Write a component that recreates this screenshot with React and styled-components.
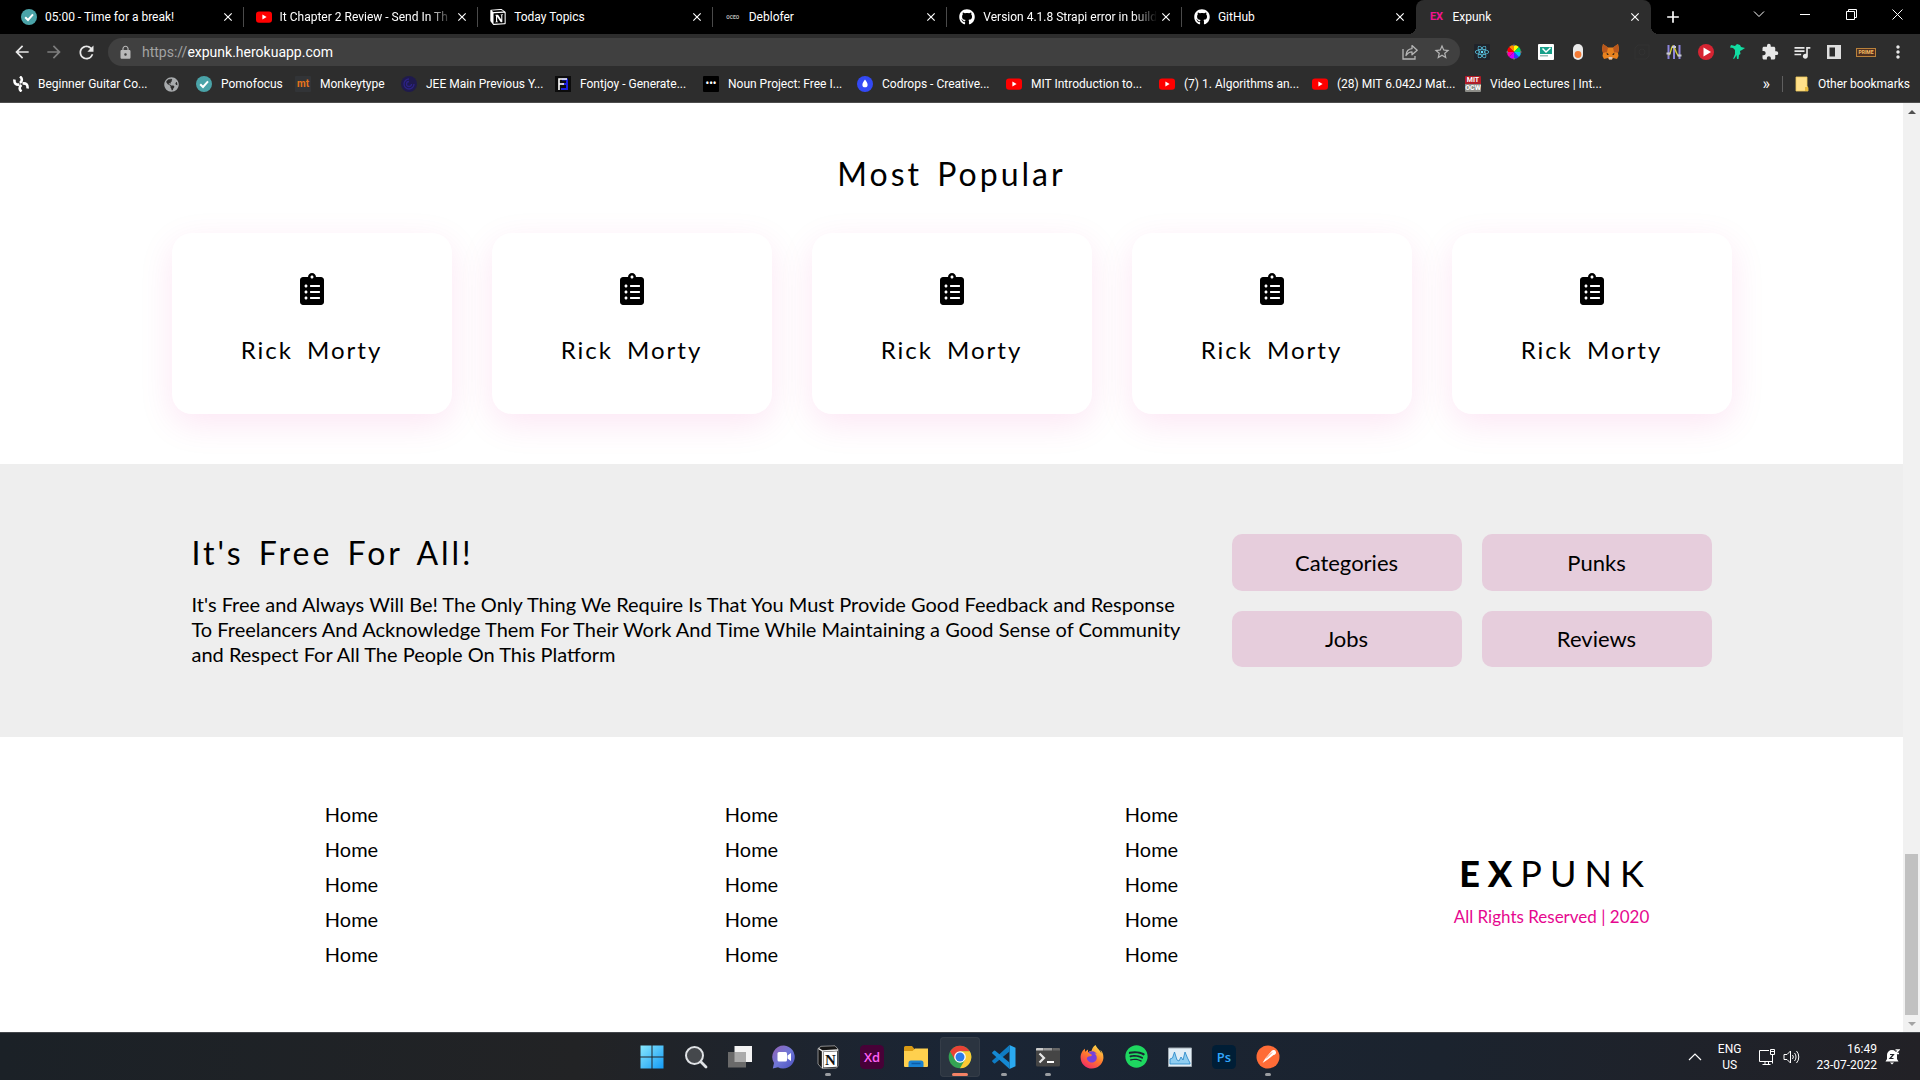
import React from "react";
import styled, { createGlobalStyle, css } from "styled-components";
import {
  FaClipboardList, FaGithub, FaYoutube, FaReact, FaSpotify, FaFirefoxBrowser, FaGlobeAmericas,
} from "react-icons/fa";
import {
  MdArrowBack, MdArrowForward, MdRefresh, MdLock, MdStarBorder, MdExtension, MdQueueMusic, MdMoreVert, MdClose, MdAdd,
} from "react-icons/md";
import { SiNotion } from "react-icons/si";

const GlobalStyle = createGlobalStyle`
  *, *::before, *::after { box-sizing: border-box; }
  body { margin: 0; background: #fff; }
  button, input { font: inherit; color: inherit; border: 0; background: none; padding: 0; margin: 0; }
  a { color: inherit; text-decoration: none; }
  h1, h2, h3, p, ul { margin: 0; padding: 0; font-weight: 400; }
  ul { list-style: none; }
  svg { display: block; flex: none; }
`;

const uiFont = `Roboto, "Open Sans", sans-serif`;
const siteFont = `Lato, "Open Sans", sans-serif`;

/* ---------- Window frame ---------- */

const Desktop = styled.div`
  display: flex;
  flex-direction: column;
  min-height: 100vh;
`;

const BrowserHeader = styled.header`
  font: 12px/16px ${uiFont};
  color: #fff;
  background: #2d2d2d;
  border-bottom: 1px solid #4d4d4d;
`;

const TabStrip = styled.div`
  display: flex;
  height: 34px;
  padding-left: 9px;
  background: #000;
`;

const Tabs = styled.div`
  display: flex;
  flex: 1 1 0;
  max-width: 1642px;
`;

const Tab = styled.div`
  display: flex;
  align-items: center;
  flex: 1 1 0;
  min-width: 0;
  padding: 0 7px 0 12px;
  position: relative;
  ${({ $divider }) => $divider && css`
    &::after {
      content: "";
      position: absolute;
      right: 0;
      top: 7px;
      height: 20px;
      width: 1px;
      background: #4a4a4a;
    }
  `}
  ${({ $active }) => $active && css`
    background: #2d2d2d;
    border-radius: 8px 8px 0 0;
    &::before, &::after {
      content: "";
      position: absolute;
      bottom: 0;
      width: 8px;
      height: 8px;
    }
    &::before {
      left: -8px;
      background: radial-gradient(circle at 0 0, transparent 8px, #2d2d2d 8px);
    }
    &::after {
      right: -8px;
      background: radial-gradient(circle at 100% 0, transparent 8px, #2d2d2d 8px);
    }
  `}
`;

const TabButton = styled.button`
  display: flex;
  align-items: center;
  gap: 8px;
  flex: 1;
  min-width: 0;
  height: 100%;
  text-align: left;
`;

const TabTitle = styled.span`
  flex: 1;
  overflow: hidden;
  white-space: nowrap;
  ${({ $fade }) => $fade && css`
    mask-image: linear-gradient(90deg, #000 calc(100% - 24px), transparent);
  `}
`;

const IconButton = styled.button`
  display: grid;
  place-items: center;
  width: ${({ $w }) => $w || 32}px;
  height: 28px;
  flex: none;
  color: ${({ $color }) => $color || "#e8e8e8"};
`;

const TabClose = styled(IconButton)`
  width: 18px;
  color: #fff;
`;

const NewTab = styled(IconButton)`
  width: 44px;
  height: 34px;
  color: #fff;
`;

const WindowControls = styled.div`
  display: flex;
  margin-left: auto;
`;

const WindowButton = styled(IconButton)`
  width: 46px;
  color: #fff;
`;

const Toolbar = styled.div`
  display: flex;
  align-items: center;
  height: 36px;
  padding: 0 6px;
`;

const AddressBar = styled.form`
  display: flex;
  align-items: center;
  flex: 1;
  height: 28px;
  margin: 0 6px;
  padding: 0 2px 0 10px;
  border-radius: 14px;
  background: #404040;
  font-size: 14px;
  color: #fff;
`;

const Scheme = styled.label`
  margin-left: 9px;
  color: #a3a3a3;
`;

const AddressInput = styled.input`
  flex: 1;
  min-width: 0;
  outline: 0;
`;

const Bookmarks = styled.nav`
  display: flex;
  align-items: center;
  height: 32px;
  padding: 0 10px 4px 13px;
`;

const Bookmark = styled.a`
  display: flex;
  align-items: center;
  gap: 9px;
  flex: 0 0 ${({ $w }) => ($w ? `${$w}px` : "auto")};
  white-space: nowrap;
`;

const BookmarksEnd = styled.div`
  display: flex;
  align-items: center;
  gap: 12px;
  margin-left: auto;
`;

const MoreBookmarks = styled.button`
  font-size: 16px;
`;

const Divider = styled.span`
  width: 1px;
  height: 16px;
  background: #5f5f5f;
`;

const Badge = styled.span`
  display: grid;
  place-items: center;
  width: 16px;
  height: 16px;
  flex: none;
  overflow: hidden;
  border-radius: ${({ $round }) => ($round ? "50%" : "1px")};
  background: ${({ $bg }) => $bg || "transparent"};
  color: ${({ $color }) => $color || "#fff"};
  font: 700 ${({ $size }) => $size || 9}px/${({ $lh }) => $lh || 16}px ${uiFont};
  text-align: center;
  white-space: normal;
`;

/* ---------- Web page ---------- */

const Viewport = styled.div`
  display: flex;
  flex: 1;
`;

const Page = styled.main`
  display: flex;
  flex-direction: column;
  flex: 1;
  min-width: 0;
  background: #fff;
  color: #000;
  font: 20px/25px ${siteFont};
`;

const Popular = styled.section`
  display: flex;
  flex-direction: column;
  align-items: center;
  gap: 40px;
  padding: 52px 20px 50px;
`;

const SectionTitle = styled.h2`
  font-size: 32px;
  line-height: 38px;
  letter-spacing: 3px;
  word-spacing: 4px;
`;

const CardRow = styled.ul`
  display: grid;
  grid-template-columns: repeat(5, 1fr);
  gap: 40px;
  width: 100%;
  max-width: 1560px;
`;

const Card = styled.li`
  display: flex;
  flex-direction: column;
  align-items: center;
  gap: 30px;
  padding: 40px 20px 49px;
  border-radius: 20px;
  background: #fff;
  box-shadow: 0 10px 35px rgba(230, 7, 143, 0.1);
`;

const CardTitle = styled.h3`
  font-size: 24px;
  line-height: 30px;
  letter-spacing: 2px;
  word-spacing: 6px;
`;

const FreeBand = styled.section`
  padding: 70px 20px;
  background: #eee;
`;

const FreeInner = styled.div`
  display: flex;
  justify-content: space-between;
  gap: 40px;
  max-width: 1520px;
  margin: 0 auto;
`;

const FreeText = styled.div`
  display: flex;
  flex-direction: column;
  flex: 1;
  gap: 20px;
  max-width: 1000px;
`;

const ButtonGrid = styled.div`
  display: grid;
  grid-template-columns: 230px 230px;
  gap: 20px;
`;

const TopicButton = styled.button`
  min-height: 56px;
  border-radius: 10px;
  background: #e6cddc;
  font-size: 22px;
`;

const Footer = styled.footer`
  display: grid;
  grid-template-columns: repeat(4, minmax(0, 400px));
  justify-content: center;
  align-items: center;
  flex: 1;
  padding: 60px 0;
`;

const FooterLinks = styled.ul`
  line-height: 35px;
  text-align: center;
`;

const Brand = styled.div`
  display: flex;
  flex-direction: column;
  align-items: center;
`;

const Wordmark = styled.p`
  padding-left: 8px;
  font-size: 36px;
  line-height: 64px;
  letter-spacing: 8px;
  strong { font-weight: 900; }
`;

const Rights = styled.p`
  color: #e6078f;
  font-size: 17px;
  line-height: 24px;
`;

const ScrollTrack = styled.div`
  display: flex;
  flex-direction: column;
  align-items: center;
  width: 17px;
  background: #f1f1f1;
`;

const ScrollArrow = styled.span`
  display: grid;
  place-items: center;
  width: 17px;
  height: 17px;
`;

const ScrollThumb = styled.div`
  width: 13px;
  height: 161px;
  margin-top: auto;
  background: #c1c1c1;
`;

/* ---------- Taskbar ---------- */

const Taskbar = styled.footer`
  display: grid;
  grid-template-columns: 1fr auto 1fr;
  align-items: center;
  height: 48px;
  border-top: 1px solid #43464b;
  background: linear-gradient(90deg, #1b2127, #222325 30%, #1a2535 50%, #1b232e 75%, #222126);
  color: #fff;
  font: 12px/16px ${uiFont};
`;

const Apps = styled.div`
  display: flex;
  gap: 4px;
  grid-column: 2;
`;

const AppButton = styled.button`
  display: grid;
  place-items: center;
  position: relative;
  width: 40px;
  height: 40px;
  border-radius: 4px;
  ${({ $active }) => $active && css`
    background: #2b3440;
    box-shadow: inset 0 0 0 1px #353d48;
  `}
  ${({ $running }) => $running && css`
    &::after {
      content: "";
      position: absolute;
      bottom: 1px;
      left: 50%;
      width: ${({ $active }) => ($active ? 16 : 6)}px;
      height: 3px;
      border-radius: 2px;
      background: ${({ $active }) => ($active ? "#f58265" : "#9a9da1")};
      transform: translateX(-50%);
    }
  `}
`;

const Tray = styled.div`
  display: flex;
  align-items: center;
  justify-content: flex-end;
  padding-right: 20px;
`;

const TrayText = styled.div`
  text-align: ${({ $align }) => $align};
  margin-right: ${({ $mr }) => $mr}px;
`;

const TrayIcons = styled.div`
  display: flex;
  gap: 8px;
  margin-right: ${({ $mr }) => $mr}px;
`;

/* ---------- Drawn icons ---------- */

const Check = () => (
  <svg width="16" height="16" viewBox="0 0 16 16">
    <circle cx="8" cy="8" r="8" fill="#4aa3a8" />
    <path d="M4.2 8.2 7 11l5-5.6" fill="none" stroke="#fff" strokeWidth="2" />
  </svg>
);
const YouTube = () => (
  <svg width="16" height="16" viewBox="0 0 16 16">
    <rect x="0" y="2.4" width="16" height="11.4" rx="3" fill="#f00" />
    <path d="M6.4 5.6v5l4.2-2.5z" fill="#fff" />
  </svg>
);
const Knot = () => (
  <svg width="16" height="16" viewBox="0 0 16 16" fill="none" stroke="#fff" strokeWidth="2.600">
    <path d="M7 .5C9.500 2.500 9.500 5 7 7M1.500 3.500C1 7.500 3 9 6.500 8.500" />
    <path d="M8.500 15.500C6 13.500 6 11 8.500 9M14.500 12.500C15 8.500 13 7 9.500 7.500" />
  </svg>
);
const Whorl = () => (
  <svg width="16" height="16" viewBox="0 0 16 16">
    <circle cx="8" cy="8" r="8" fill="#1f1a4d" />
    <path d="M8 3a5 5 0 1 0 5 5M8 5.500a2.500 2.500 0 1 0 2.500 2.500" fill="none" stroke="#2c2285" strokeWidth="1.300" />
  </svg>
);
const FontTile = () => (
  <svg width="16" height="16" viewBox="0 0 16 16">
    <rect width="16" height="16" fill="#0c0c0c" />
    <path d="M7 3.500h6M7 8h6M6 13h7M12 4v9" stroke="#1b20e0" strokeWidth="2" />
    <path d="M4 14V3h8M4 8h5" fill="none" stroke="#fff" strokeWidth="1.600" />
  </svg>
);
const Drop = () => (
  <svg width="16" height="16" viewBox="0 0 16 16">
    <circle cx="8" cy="8" r="8" fill="#3349f5" />
    <path d="M8 3.500c1.500 2.200 2.600 3.700 2.600 5.200a2.600 2.600 0 0 1-5.200 0C5.400 7.200 6.500 5.700 8 3.500z" fill="#fff" />
  </svg>
);
const Folder = () => (
  <svg width="14" height="16" viewBox="0 0 14 16">
    <path d="M1 1h11v9l1 2v3H1z" fill="#ffe08a" stroke="#eec95a" strokeWidth=".8" />
    <path d="M10 11h3v4h-3z" fill="#e8bb3d" />
  </svg>
);
const Share = () => (
  <svg width="16" height="16" viewBox="0 0 16 16" fill="none" stroke="#b5b5b5" strokeWidth="1.300">
    <path d="M1 5v10h12v-3" />
    <path d="M4 11.500C4.300 7.500 6.500 5 10 4.700V1.600L15.200 6.200 10 10.700V7.800C7.500 7.800 5.600 9 4 11.500z" strokeLinejoin="round" />
  </svg>
);
const ReactExt = () => (
  <Badge $bg="#20232a" $color="#61dafb"><FaReact size={14} /></Badge>
);
const hueWedges = ["#ff0", "#f80", "#f00", "#f0a", "#c0f", "#33f", "#0bf", "#0d6"];
const Wheel = () => (
  <svg width="16" height="16" viewBox="-8 -8 16 16">
    {hueWedges.map((c, i) => (
      <path key={c} d="M0 0 0-7A7 7 0 0 1 4.950-4.950z" fill={c} transform={`rotate(${i * -45})`} />
    ))}
    <path d="M0-8 1.500-6h-3zM0 8 1.500 6h-3zM-8 0-6-1.500v3zM8 0 6-1.500v3z" fill="#777" />
  </svg>
);
const MailExt = () => (
  <svg width="16" height="16" viewBox="0 0 16 16">
    <rect width="16" height="16" rx="1" fill="#fff" />
    <path d="M2 3h12v7H2z" fill="#17a08a" />
    <path d="M4.500 4.500 8 8l4.500-4.200" fill="none" stroke="#fff" strokeWidth="1.500" />
    <path d="M2 11h8v1.500H2z" fill="#9bbcb6" />
  </svg>
);
const ToggleExt = () => (
  <svg width="16" height="16" viewBox="0 0 16 16">
    <rect x="3" y="0" width="10" height="16" rx="5" fill="#e9e9e9" />
    <circle cx="8" cy="10.500" r="3.400" fill="#f47b35" />
  </svg>
);
const Fox = () => (
  <svg width="17" height="16" viewBox="0 0 17 16">
    <path d="M1 0l5 3.500h5L16 0l1 5-1 4 .5 3-1.500 3-4-1-1 1.500H7L6 14l-4 1-1.500-3L1 9 0 5z" fill="#e8821e" />
    <path d="M1 0l5 3.500L5 8 1 9 0 5zM16 0l-5 3.500L12 8l4 1 1-4z" fill="#b8571d" />
    <path d="M4.500 8.500l2.500 2-2 .5zM12.500 8.500l-2.500 2 2 .5z" fill="#2c2018" />
    <path d="M6.500 13h4l-.5 2.500H7z" fill="#d8c3b3" />
  </svg>
);
const DimExt = () => (
  <svg width="16" height="16" viewBox="0 0 16 16" fill="none" stroke="#323232">
    <path d="M1 14V4l3-3h11v11l-3 3H1z" /><circle cx="8" cy="8" r="3" />
  </svg>
);
const Sliders = () => (
  <svg width="16" height="16" viewBox="0 0 16 16" fill="none">
    <path d="M2.500 1v14M8 1v14M13.500 1v14" stroke="#8c84dc" strokeWidth="2" />
    <path d="M2.500 11C5 11 5 2 7 2s3 10 6.500 10" stroke="#d5cf3a" strokeWidth="1.400" />
    <path d="M.5 9.500h4M6 3h4M11.500 11.500h4" stroke="#c7c9d4" strokeWidth="2.200" />
  </svg>
);
const PlayExt = () => (
  <svg width="16" height="16" viewBox="0 0 16 16">
    <circle cx="8" cy="8" r="8" fill="#d62432" /><path d="M5.500 3.500v9L13 8z" fill="#fff" />
  </svg>
);
const Bird = () => (
  <svg width="16" height="16" viewBox="0 0 16 16" fill="#12dda2">
    <path d="M1 1l4 1 2-2 3 1 1 2 4 1-3 2-2 1 .5 3-1.500 1-.5 4H7l-.5-4-2 3.500L3 15l2-5 0-4-2-2L0 3.500z" />
  </svg>
);
const Panel = () => (
  <svg width="14" height="14" viewBox="0 0 14 14">
    <path fillRule="evenodd" d="M0 0h14v14H0zM2.500 2.500v9H8v-9z" fill="#dedede" />
  </svg>
);
const Prime = styled.span`
  padding: 0 1px;
  border: 1px solid #b9823b;
  background: #50301f;
  color: #f7bd62;
  font: 700 5px/7px ${uiFont};
`;
const Caret = () => (
  <svg width="12" height="8" viewBox="0 0 12 8" fill="none" stroke="#fff"><path d="M1 1.500 6 6.500l5-5" /></svg>
);
const Minus = () => (
  <svg width="10" height="10" viewBox="0 0 10 10"><path d="M0 5h10v1H0z" fill="#fff" /></svg>
);
const Restore = () => (
  <svg width="11" height="11" viewBox="0 0 11 11" fill="none" stroke="#fff">
    <path d="M.5 2.500h8v8h-8zM2.500 2.500v-2h8v8h-2" />
  </svg>
);
const Cross = () => (
  <svg width="11" height="11" viewBox="0 0 11 11" fill="none" stroke="#fff"><path d="M.5.5l10 10M10.500.5l-10 10" /></svg>
);

const Windows = () => (
  <svg width="24" height="24" viewBox="0 0 24 24">
    <defs>
      <linearGradient id="win" x1="0" y1="0" x2="24" y2="24" gradientUnits="userSpaceOnUse">
        <stop offset="0" stopColor="#8be9fd" /><stop offset="1" stopColor="#1199f5" />
      </linearGradient>
    </defs>
    <path fill="url(#win)" d="M.5.5h11v11H.5zM12.500.5h11v11h-11zM.5 12.500h11v11H.5zM12.500 12.500h11v11h-11z" />
  </svg>
);
const Search = () => (
  <svg width="24" height="24" viewBox="0 0 24 24" fill="none" stroke="#dfe2e5">
    <circle cx="10.500" cy="10.500" r="8.500" strokeWidth="2" fill="#45484c" />
    <path d="M16.800 16.800 22 22" strokeWidth="2.800" strokeLinecap="round" />
  </svg>
);
const TaskView = () => (
  <svg width="24" height="24" viewBox="0 0 24 24">
    <path d="M6.500 1H24v16H6.500z" fill="#f3f3f3" />
    <path d="M0 7h18v15.500H0z" fill="#6a6a6a" />
    <path d="M6.500 7H18v10H6.500z" fill="#aaa" />
  </svg>
);
const Chat = () => (
  <svg width="24" height="24" viewBox="0 0 24 24">
    <defs>
      <linearGradient id="chat" x1="0" y1="0" x2="1" y2="1">
        <stop offset="0" stopColor="#9560b4" /><stop offset=".5" stopColor="#7077d6" /><stop offset="1" stopColor="#4a4fbf" />
      </linearGradient>
    </defs>
    <path d="M12 .5A11.500 11.500 0 1 1 6 22.200L.8 23.500 2 18A11.500 11.500 0 0 1 12 .5z" fill="url(#chat)" />
    <rect x="5.500" y="7" width="9.500" height="9.500" rx="1.500" fill="#fff" />
    <path d="M15.500 10.500 19 8v8l-3.500-2.500z" fill="#fff" />
  </svg>
);
const NotionCube = () => (
  <svg width="24" height="24" viewBox="0 0 24 24">
    <path d="M2 3.500 5 1.300 19 .8 22 4v17l-1.500 2L6 23.500 2 19z" fill="#151515" stroke="#aaa" strokeWidth=".8" />
    <path d="M2.500 3.500 6.500 6 22 5M6.500 6v17" fill="none" stroke="#eee" strokeWidth="1.300" />
    <path d="M7.500 7 21 6.200v15.500l-13.500.8z" fill="#fff" />
    <text x="14.300" y="19.500" textAnchor="middle" fontFamily="Liberation Serif, serif" fontWeight="700" fontSize="15" fill="#111">N</text>
  </svg>
);
const Adobe = ({ bg, color, children }) => (
  <svg width="24" height="24" viewBox="0 0 24 24">
    <rect width="24" height="24" rx="4.500" fill={bg} />
    <text x="12" y="16.500" textAnchor="middle" fontFamily="Open Sans, sans-serif" fontWeight="600" fontSize="13" fill={color}>{children}</text>
  </svg>
);
const Explorer = () => (
  <svg width="24" height="24" viewBox="0 0 24 24">
    <path d="M0 2.500A1.500 1.500 0 0 1 1.500 1H8l2.500 3v4H0z" fill="#d99a14" />
    <path d="M0 6h8.500L11 3.500h13V21a1 1 0 0 1-1 1H1a1 1 0 0 1-1-1z" fill="#ffd04e" />
    <path d="M4.500 22v-4a2.500 2.500 0 0 1 2.500-2.500h10a2.500 2.500 0 0 1 2.500 2.500v4z" fill="#1a82d2" />
    <path d="M7.500 18.500h9" stroke="#0d5ba5" strokeWidth="1.500" />
  </svg>
);
const Chrome = () => (
  <svg width="24" height="24" viewBox="0 0 24 24">
    <circle cx="12" cy="12" r="11.300" fill="#34a353" />
    <path d="M2.210 6.350A11.300 11.300 0 0 1 21.790 6.350H12L7.100 14.830z" fill="#e94235" />
    <path d="M21.790 6.350A11.300 11.300 0 0 1 12 23.300l4.900-8.470L12 6.350z" fill="#fcc934" />
    <path d="M2.210 6.350 7.100 14.830 12 12V6.350z" fill="#e94235" />
    <circle cx="12" cy="12" r="5.800" fill="#fff" /><circle cx="12" cy="12" r="4.500" fill="#2e7be9" />
  </svg>
);
const VSCode = () => (
  <svg width="24" height="24" viewBox="0 0 24 24">
    <path d="M17.500 0 23.500 2.800v18.400L17.500 24z" fill="#2aa9f0" />
    <path d="M17.500 0v6.500L3.200 18.200a1 1 0 0 1-1.300 0L.4 16.800a1 1 0 0 1 0-1.400z" fill="#0f7cc4" />
    <path d="M17.500 24v-6.500L3.200 5.800a1 1 0 0 0-1.300 0L.4 7.200a1 1 0 0 0 0 1.400z" fill="#1589d3" />
  </svg>
);
const Terminal = () => (
  <svg width="24" height="24" viewBox="0 0 24 24">
    <rect y="3" width="24" height="18.500" rx="1.500" fill="#454545" />
    <path d="M0 5.500V4a1 1 0 0 1 1-1h6.500v2.500z" fill="#ccc" /><path d="M8 3h8v2.500H8z" fill="#999" /><path d="M16.500 3H23a1 1 0 0 1 1 1v1.500h-7.500z" fill="#666" />
    <path d="M3.500 8.500 8 13l-4.500 4.500" fill="none" stroke="#e6e6e6" strokeWidth="2.200" />
    <path d="M11 16h7v2h-7z" fill="#fff" />
  </svg>
);
const FirefoxStack = styled.span`
  display: grid;
  > * { grid-area: 1 / 1; }
`;
const Firefox = () => (
  <FirefoxStack>
    <svg width="24" height="24" viewBox="0 0 24 24">
      <defs>
        <linearGradient id="fire" x1=".8" y1="0" x2=".2" y2="1">
          <stop offset="0" stopColor="#ffe14a" /><stop offset=".5" stopColor="#ff7a2d" /><stop offset="1" stopColor="#f2246a" />
        </linearGradient>
      </defs>
      <circle cx="12" cy="13" r="7" fill="#7640dc" />
    </svg>
    <FaFirefoxBrowser size={24} fill="url(#fire)" />
  </FirefoxStack>
);
const Monitor = () => (
  <svg width="24" height="24" viewBox="0 0 24 24">
    <path d="M.5 3h23v18.500H.5z" fill="#e2eef6" stroke="#9fa9b1" />
    <path d="M2 19v-5l2.500-1 2-6 2.500 8 2 1 2-4 2 3 2-8 2.500 6 2.500 5v1z" fill="#8fcdf0" stroke="#2283c5" strokeWidth=".8" />
  </svg>
);
const Postman = () => (
  <svg width="24" height="24" viewBox="0 0 24 24">
    <circle cx="12" cy="12" r="11.500" fill="#ff6c37" />
    <path d="M16 5.500a2.500 2.500 0 1 1 1.500 4.500L11 15l-4.500 3 3-5z" fill="#fff" />
    <path d="M10 13.500 16 7.500" stroke="#ff6c37" strokeWidth=".8" />
  </svg>
);
const Network = () => (
  <svg width="16" height="16" viewBox="0 0 16 16" fill="none" stroke="#fff">
    <path d="M10 1.500H.5v11h13V7.500M3.500 15.500h8M6 12.500v3M9.500 12.500v3M11.500.5h4v5h-4zM13.500 5.500v9M12 2.500h3" />
  </svg>
);
const Volume = () => (
  <svg width="17" height="16" viewBox="0 0 17 16" fill="none" stroke="#fff" strokeLinejoin="round">
    <path d="M1 5.500h3L7.500 2v12L4 10.500H1zM9.500 6a3 3 0 0 1 0 4M11.500 4a6 6 0 0 1 0 8M13.500 2a9 9 0 0 1 0 12" />
  </svg>
);
const Bell = () => (
  <svg width="15" height="16" viewBox="0 0 15 16">
    <path d="M7 1a5 5 0 0 0-5 5v4L.5 12.500h13L12 10V6a5 5 0 0 0-5-5zM5 13.500h4L7 15.500z" fill="#fff" />
    <path d="M5 5.500h3.500L5 9.500h3.500" fill="none" stroke="#1f2229" strokeWidth="1.200" />
    <path d="M10.500.8h3.500L10.500 4.500H14" fill="none" stroke="#fff" strokeWidth="1.300" />
  </svg>
);

/* ---------- Data ---------- */

const tabs = [
  { title: "05:00 - Time for a break!", icon: <Check /> },
  { title: "It Chapter 2 Review - Send In Th", icon: <YouTube />, fade: true },
  { title: "Today Topics", icon: <SiNotion size={16} /> },
  { title: "Deblofer", icon: <Badge $size={5} $color="#bbb">OCEO</Badge> },
  { title: "Version 4.1.8 Strapi error in build", icon: <FaGithub size={16} />, fade: true },
  { title: "GitHub", icon: <FaGithub size={16} /> },
  { title: "Expunk", icon: <Badge $size={11} $color="#f0148f">EX</Badge>, active: true },
];

const bookmarks = [
  { label: "Beginner Guitar Co...", icon: <Knot />, w: 151 },
  { label: "", icon: <FaGlobeAmericas size={15} color="#a8abad" />, w: 32 },
  { label: "Pomofocus", icon: <Check />, w: 99 },
  { label: "Monkeytype", icon: <Badge $bg="#323437" $color="#e8751a" $size={10}>mt</Badge>, w: 106 },
  { label: "JEE Main Previous Y...", icon: <Whorl />, w: 154 },
  { label: "Fontjoy - Generate...", icon: <FontTile />, w: 148 },
  { label: "Noun Project: Free I...", icon: <Badge $bg="#000" $size={10}>•••</Badge>, w: 154 },
  { label: "Codrops - Creative...", icon: <Drop />, w: 149 },
  { label: "MIT Introduction to...", icon: <YouTube />, w: 153 },
  { label: "(7) 1. Algorithms an...", icon: <YouTube />, w: 153 },
  { label: "(28) MIT 6.042J Mat...", icon: <YouTube />, w: 153 },
  { label: "Video Lectures | Int...", icon: <Badge $bg="linear-gradient(#b01c28 50%, #8d8d88 50%)" $size={7} $lh={8}>MIT OCW</Badge> },
];

const extensions = [
  ["React Developer Tools", <ReactExt />],
  ["Color picker", <Wheel />],
  ["Mail tracker", <MailExt />],
  ["Toggle", <ToggleExt />],
  ["Wallet", <Fox />],
  ["Capture", <DimExt />],
  ["Equalizer", <Sliders />],
  ["Player", <PlayExt />],
  ["Bird", <Bird />],
  ["Extensions", <MdExtension size={18} />],
  ["Media", <MdQueueMusic size={20} />],
  ["Side panel", <Panel />],
  ["Profile", <Prime>PRIME</Prime>],
  ["Menu", <MdMoreVert size={20} />],
];

const apps = [
  { name: "Start", icon: <Windows /> },
  { name: "Search", icon: <Search /> },
  { name: "Task view", icon: <TaskView /> },
  { name: "Chat", icon: <Chat /> },
  { name: "Notion", icon: <NotionCube />, running: true },
  { name: "Adobe XD", icon: <Adobe bg="#470137" color="#ff61f6">Xd</Adobe> },
  { name: "File Explorer", icon: <Explorer /> },
  { name: "Chrome", icon: <Chrome />, running: true, active: true },
  { name: "Visual Studio Code", icon: <VSCode />, running: true },
  { name: "Terminal", icon: <Terminal />, running: true },
  { name: "Firefox", icon: <Firefox /> },
  { name: "Spotify", icon: <FaSpotify size={23} color="#1ed760" /> },
  { name: "Performance", icon: <Monitor /> },
  { name: "Photoshop", icon: <Adobe bg="#001e36" color="#31a8ff">Ps</Adobe> },
  { name: "Postman", icon: <Postman />, running: true },
];

const topics = ["Categories", "Punks", "Jobs", "Reviews"];

export default function App() {
  return (
    <Desktop>
      <GlobalStyle />
      <BrowserHeader>
        <TabStrip>
          <Tabs>
            {tabs.map((t, i) => (
              <Tab key={i} $active={t.active} $divider={i < 5}>
                <TabButton type="button">
                  {t.icon}
                  <TabTitle $fade={t.fade}>{t.title}</TabTitle>
                </TabButton>
                <TabClose type="button" aria-label="Close tab"><MdClose size={14} /></TabClose>
              </Tab>
            ))}
          </Tabs>
          <NewTab type="button" aria-label="New tab"><MdAdd size={20} /></NewTab>
          <WindowControls>
            <WindowButton type="button" aria-label="Search tabs"><Caret /></WindowButton>
            <WindowButton type="button" aria-label="Minimize"><Minus /></WindowButton>
            <WindowButton type="button" aria-label="Restore"><Restore /></WindowButton>
            <WindowButton type="button" aria-label="Close"><Cross /></WindowButton>
          </WindowControls>
        </TabStrip>
        <Toolbar>
          <IconButton type="button" aria-label="Back"><MdArrowBack size={20} /></IconButton>
          <IconButton type="button" aria-label="Forward" $color="#7d7d7d"><MdArrowForward size={20} /></IconButton>
          <IconButton type="button" aria-label="Reload"><MdRefresh size={21} /></IconButton>
          <AddressBar>
            <MdLock size={15} color="#b8b8b8" />
            <Scheme htmlFor="address">https://</Scheme>
            <AddressInput id="address" type="text" defaultValue="expunk.herokuapp.com" />
            <IconButton type="button" aria-label="Share"><Share /></IconButton>
            <IconButton type="button" aria-label="Bookmark" $color="#b5b5b5"><MdStarBorder size={18} /></IconButton>
          </AddressBar>
          {extensions.map(([name, icon]) => (
            <IconButton key={name} type="button" aria-label={name}>{icon}</IconButton>
          ))}
        </Toolbar>
        <Bookmarks>
          {bookmarks.map((b) => (
            <Bookmark key={b.label} href="#" $w={b.w} aria-label={b.label || "Website"}>
              {b.icon}
              {b.label}
            </Bookmark>
          ))}
          <BookmarksEnd>
            <MoreBookmarks type="button">»</MoreBookmarks>
            <Divider />
            <Bookmark href="#"><Folder />Other bookmarks</Bookmark>
          </BookmarksEnd>
        </Bookmarks>
      </BrowserHeader>

      <Viewport>
        <Page>
          <Popular>
            <SectionTitle>Most Popular</SectionTitle>
            <CardRow>
              {[0, 1, 2, 3, 4].map((n) => (
                <Card key={n}>
                  <FaClipboardList size={32} />
                  <CardTitle>Rick Morty</CardTitle>
                </Card>
              ))}
            </CardRow>
          </Popular>
          <FreeBand>
            <FreeInner>
              <FreeText>
                <SectionTitle>It's Free For All!</SectionTitle>
                <p>
                  It's Free and Always Will Be! The Only Thing We Require Is That You Must Provide Good Feedback and Response
                  To Freelancers And Acknowledge Them For Their Work And Time While Maintaining a Good Sense of Community
                  and Respect For All The People On This Platform
                </p>
              </FreeText>
              <ButtonGrid>
                {topics.map((t) => <TopicButton key={t} type="button">{t}</TopicButton>)}
              </ButtonGrid>
            </FreeInner>
          </FreeBand>
          <Footer>
            {[0, 1, 2].map((c) => (
              <FooterLinks key={c}>
                {[0, 1, 2, 3, 4].map((r) => <li key={r}><a href="#">Home</a></li>)}
              </FooterLinks>
            ))}
            <Brand>
              <Wordmark><strong>EX</strong>PUNK</Wordmark>
              <Rights>All Rights Reserved | 2020</Rights>
            </Brand>
          </Footer>
        </Page>
        <ScrollTrack>
          <ScrollArrow><svg width="8" height="4" viewBox="0 0 8 4"><path d="M0 4 4 0l4 4z" fill="#505050" /></svg></ScrollArrow>
          <ScrollThumb />
          <ScrollArrow><svg width="8" height="4" viewBox="0 0 8 4"><path d="M0 0l4 4 4-4z" fill="#a3a3a3" /></svg></ScrollArrow>
        </ScrollTrack>
      </Viewport>

      <Taskbar>
        <Apps>
          {apps.map((a) => (
            <AppButton key={a.name} type="button" aria-label={a.name} $active={a.active} $running={a.running}>{a.icon}</AppButton>
          ))}
        </Apps>
        <Tray>
          <TrayIcons $mr={16}>
            <svg width="14" height="8" viewBox="0 0 14 8" fill="none" stroke="#fff" strokeWidth="1.200"><path d="M1 7l6-6 6 6" /></svg>
          </TrayIcons>
          <TrayText $align="center" $mr={18}>ENG<br />US</TrayText>
          <TrayIcons $mr={16}><Network /><Volume /></TrayIcons>
          <TrayText $align="right" $mr={8}>16:49<br />23-07-2022</TrayText>
          <Bell />
        </Tray>
      </Taskbar>
    </Desktop>
  );
}
